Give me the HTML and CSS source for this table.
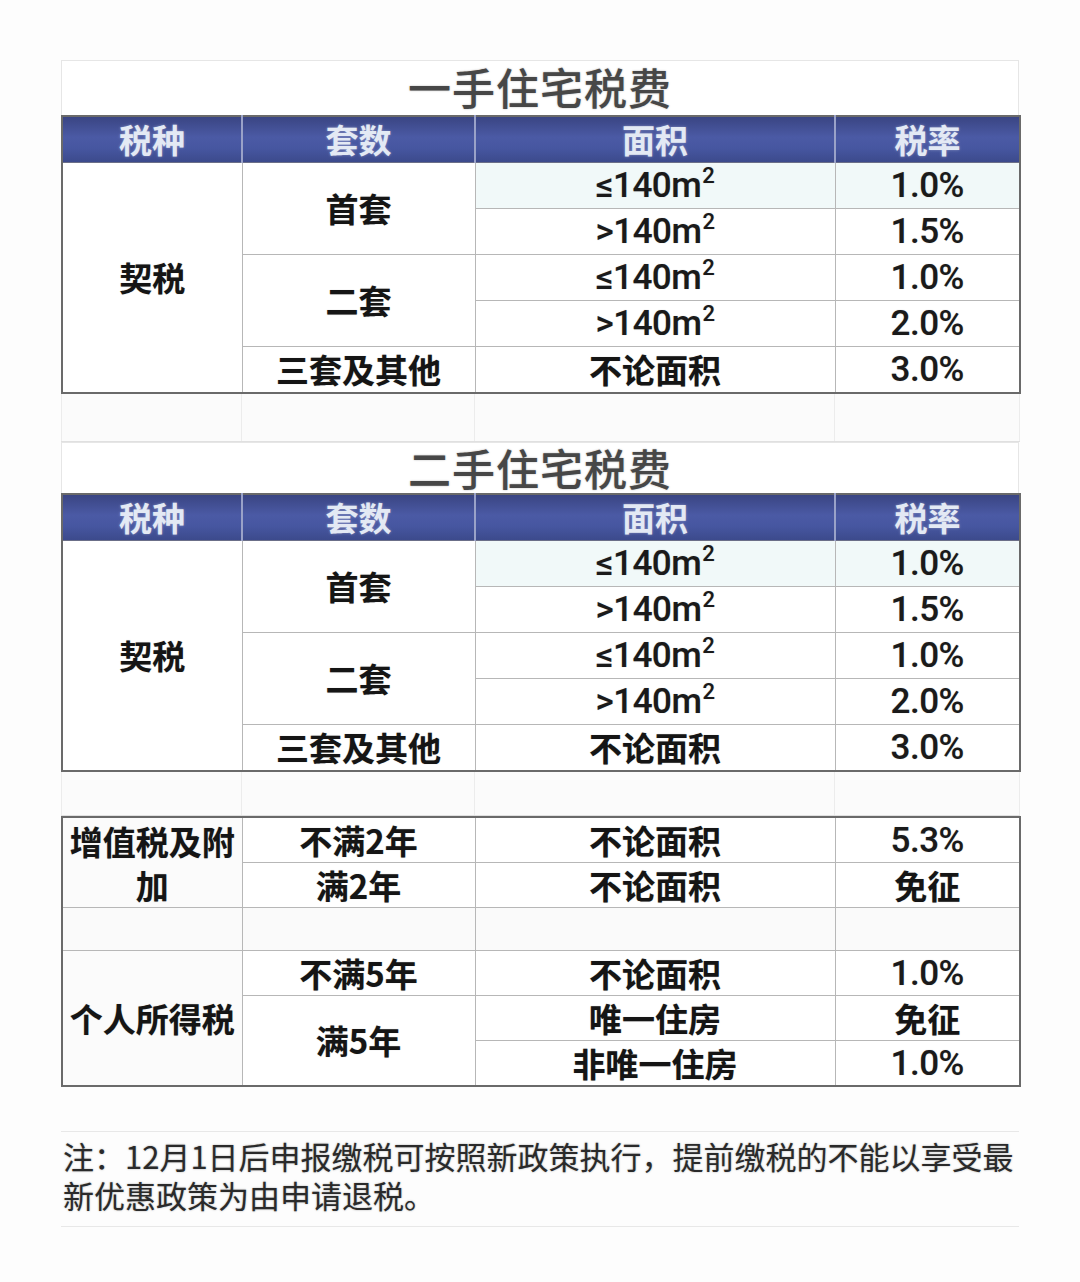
FILE: index.html
```html
<!DOCTYPE html>
<html lang="zh-CN">
<head>
<meta charset="utf-8">
<title>住宅税费</title>
<link rel="stylesheet" href="styles.css">
</head>
<body>
<div class="sheet">
  <div class="title-block first"><span>一手住宅税费</span></div>
  <table class="tax">
    <colgroup><col class="c1"><col class="c2"><col class="c3"><col class="c4"></colgroup>
    <thead>
      <tr class="head"><th>税种</th><th>套数</th><th>面积</th><th>税率</th></tr>
    </thead>
    <tbody>
      <tr class="r top"><td rowspan="5" class="cat">契税</td><td rowspan="2" class="plain">首套</td><td class="num">≤140m<sup>2</sup></td><td class="num">1.0%</td></tr>
      <tr class="r"><td class="num">&gt;140m<sup>2</sup></td><td class="num">1.5%</td></tr>
      <tr class="r"><td rowspan="2">二套</td><td class="num">≤140m<sup>2</sup></td><td class="num">1.0%</td></tr>
      <tr class="r"><td class="num">&gt;140m<sup>2</sup></td><td class="num">2.0%</td></tr>
      <tr class="r"><td>三套及其他</td><td>不论面积</td><td class="num">3.0%</td></tr>
    </tbody>
  </table>

  <table class="ghost gap1">
    <colgroup><col class="c1"><col class="c2"><col class="c3"><col class="c4"></colgroup>
    <tr><td></td><td></td><td></td><td></td></tr>
  </table>

  <div class="title-block second"><span>二手住宅税费</span></div>
  <table class="tax">
    <colgroup><col class="c1"><col class="c2"><col class="c3"><col class="c4"></colgroup>
    <thead>
      <tr class="head"><th>税种</th><th>套数</th><th>面积</th><th>税率</th></tr>
    </thead>
    <tbody>
      <tr class="r top"><td rowspan="5" class="cat">契税</td><td rowspan="2" class="plain">首套</td><td class="num">≤140m<sup>2</sup></td><td class="num">1.0%</td></tr>
      <tr class="r"><td class="num">&gt;140m<sup>2</sup></td><td class="num">1.5%</td></tr>
      <tr class="r"><td rowspan="2">二套</td><td class="num">≤140m<sup>2</sup></td><td class="num">1.0%</td></tr>
      <tr class="r"><td class="num">&gt;140m<sup>2</sup></td><td class="num">2.0%</td></tr>
      <tr class="r"><td>三套及其他</td><td>不论面积</td><td class="num">3.0%</td></tr>
    </tbody>
  </table>

  <table class="ghost gap2">
    <colgroup><col class="c1"><col class="c2"><col class="c3"><col class="c4"></colgroup>
    <tr><td></td><td></td><td></td><td></td></tr>
  </table>

  <table class="tax other">
    <colgroup><col class="c1"><col class="c2"><col class="c3"><col class="c4"></colgroup>
    <tbody>
      <tr class="r"><td rowspan="2" class="cat small">增值税及附<br>加</td><td>不满2年</td><td>不论面积</td><td class="num">5.3%</td></tr>
      <tr class="r"><td>满2年</td><td>不论面积</td><td>免征</td></tr>
      <tr class="r blank"><td></td><td></td><td></td><td></td></tr>
      <tr class="r"><td rowspan="3" class="cat small">个人所得税</td><td>不满5年</td><td>不论面积</td><td class="num">1.0%</td></tr>
      <tr class="r"><td rowspan="2">满5年</td><td>唯一住房</td><td>免征</td></tr>
      <tr class="r"><td>非唯一住房</td><td class="num">1.0%</td></tr>
    </tbody>
  </table>

  <div class="note">
    <p>注：12月1日后申报缴税可按照新政策执行，提前缴税的不能以享受最</p>
    <p>新优惠政策为由申请退税。</p>
  </div>
</div>
</body>
</html>
```

FILE: styles.css
```css
html, body {
  margin: 0;
  padding: 0;
  background: #fdfdfd;
}

body {
  font-family: "Noto Sans CJK SC", "Noto Sans", sans-serif;
  color: #111;
}

.sheet {
  width: 958px;
  margin-left: 61px;
  padding-top: 60px;
}

.title-block {
  box-sizing: border-box;
  border: 1px solid #e6e6e6;
  border-bottom: none;
  display: flex;
  justify-content: center;
  align-items: center;
  background: #fff;
}

.title-block span {
  font-size: 43px;
  font-weight: 500;
  color: #474747;
  letter-spacing: 1px;
  text-shadow: 0 0 2px rgba(0,0,0,0.3);
  line-height: 1;
}

.title-block.first {
  height: 55px;
  padding-bottom: 4px;
}

.title-block.second {
  height: 51px;
  padding-bottom: 2px;
}

table {
  border-collapse: collapse;
  table-layout: fixed;
  width: 958px;
}

col.c1 { width: 180px; }
col.c2 { width: 233px; }
col.c3 { width: 360px; }
col.c4 { width: 185px; }

.tax {
  border: 2px solid #6a6a6a;
  background: #fff;
}

.tax th,
.tax td {
  padding: 0;
  text-align: center;
  vertical-align: middle;
  line-height: 1;
}

.head th {
  height: 45px;
  background: linear-gradient(180deg, #3a4583 0%, #4b5aa5 45%, #4656a0 70%, #3c4a8c 100%);
  color: #e3e9f4;
  font-size: 33px;
  font-weight: 700;
  text-shadow: 0 0 3px rgba(255,255,255,0.35);
  border-left: 2px solid #9aa2c8;
  border-bottom: 1px solid #6b6f88;
}

.head th:first-child {
  border-left: none;
}

.tax td {
  height: 45px;
  font-size: 33px;
  font-weight: 700;
  color: #151515;
  border: 1px solid #b7b7b7;
  text-shadow: 0 0 1px rgba(0,0,0,0.3);
}

.tax tr.top td {
  background: #f1f9f9;
}

.tax tr.top td.plain,
.tax tr.top td.cat {
  background: #fff;
}

.tax td.num {
  font-family: "Roboto", "Noto Sans", sans-serif;
  font-weight: 500;
  font-size: 35px;
  color: #1a1a1a;
  letter-spacing: -0.5px;
}

.tax td.num sup {
  font-size: 22px;
  vertical-align: 14px;
  line-height: 0;
  margin-left: 1px;
}

.ghost {
  border-left: 1px solid #e8e8e8;
  border-right: 1px solid #e8e8e8;
}

.ghost td {
  padding: 0;
  border-left: 1px solid #ececec;
  border-right: 1px solid #ececec;
  border-bottom: 1px solid #e0e0e0;
  background: #fbfbfb;
}

.gap1 td { height: 47px; }
.gap2 td { height: 43px; }

.other td {
  height: 44px;
}

.other td.small {
  font-size: 33px;
  line-height: 44px;
  background: #fbfbfb;
}

.other tr.blank td {
  height: 42px;
  background: #fafafa;
}

.note {
  margin-top: 44px;
  border-top: 1px solid #e8e8e8;
  border-bottom: 1px solid #e8e8e8;
  padding: 4px 0 12px 2px;
}

.note p {
  margin: 0;
  font-size: 31px;
  line-height: 39px;
  font-weight: 400;
  color: #2a2a2a;
  text-shadow: 0 0 2px rgba(0,0,0,0.35);
  white-space: nowrap;
}
```
